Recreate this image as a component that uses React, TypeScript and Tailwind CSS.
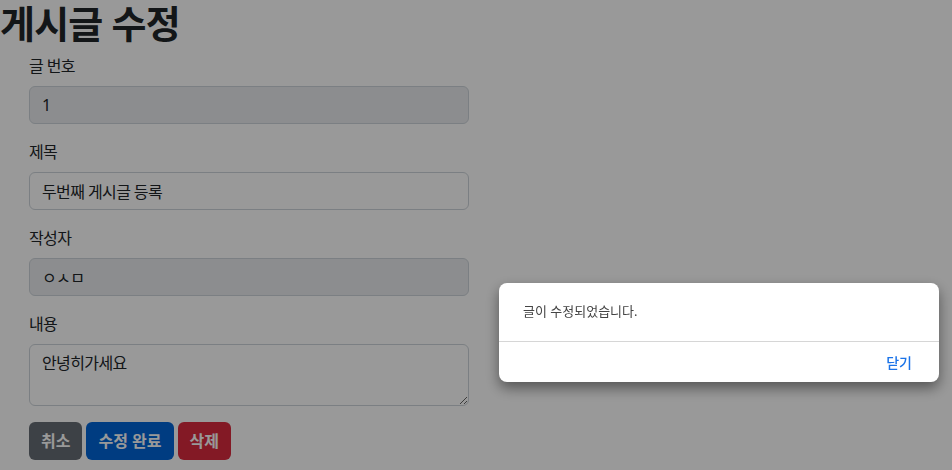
import React from "react";

const FONT = { fontFamily: '"Noto Sans", "Noto Sans CJK KR", sans-serif' };

function Field({
  label,
  value,
  disabled,
}: {
  label: string;
  value: string;
  disabled?: boolean;
}) {
  return (
    <div className="mb-4">
      <label className="mb-2 block text-base leading-6 tracking-[-0.6px]">{label}</label>
      <input
        readOnly
        value={value}
        className={`block h-[38px] w-full rounded-[6px] border border-[#ced4da] px-3 text-base tracking-[-0.6px] text-[#212529] outline-none ${
          disabled ? "bg-[#e9ecef]" : "bg-white"
        }`}
      />
    </div>
  );
}

export default function App() {
  return (
    <div className="relative h-[470px] w-[952px] overflow-hidden bg-white text-[#212529]" style={FONT}>
      <h1 className="mb-2 text-[38px] font-bold leading-[46px] tracking-[-0.8px]">게시글 수정</h1>
      <div className="w-[469px] pl-[29px]">
        <Field label="글 번호" value="1" disabled />
        <Field label="제목" value="두번째 게시글 등록" />
        <Field label="작성자" value="ㅇㅅㅁ" disabled />
        <div className="mb-4">
          <label className="mb-2 block text-base leading-6 tracking-[-0.6px]">내용</label>
          <textarea
            readOnly
            value="안녕히가세요"
            className="block h-[62px] w-full rounded-[6px] border border-[#ced4da] bg-white px-3 py-1.5 text-base leading-6 tracking-[-0.6px] outline-none"
          />
        </div>
        <div className="flex gap-1">
          <button className="h-[38px] rounded-[6px] bg-[#676d75] px-3 text-base font-bold text-white">취소</button>
          <button className="h-[38px] rounded-[6px] bg-[#0064d8] px-3 text-base font-bold text-white">수정 완료</button>
          <button className="h-[38px] rounded-[6px] bg-[#da2b3f] px-3 text-base font-bold text-white">삭제</button>
        </div>
      </div>

      <div className="fixed inset-0 bg-black/40">
        <div className="absolute left-[499px] top-[283px] w-[440px] rounded-[8px] bg-white shadow-[0_6px_14px_rgba(0,0,0,0.45)]">
          <div className="flex h-[59px] items-center border-b border-[#d6d6d6] px-6 text-[13px] text-[#444]">
            글이 수정되었습니다.
          </div>
          <div className="flex h-[40px] items-center justify-end pr-[27px]">
            <button className="text-[14px] font-medium text-[#1a73e8]">닫기</button>
          </div>
        </div>
      </div>
    </div>
  );
}
